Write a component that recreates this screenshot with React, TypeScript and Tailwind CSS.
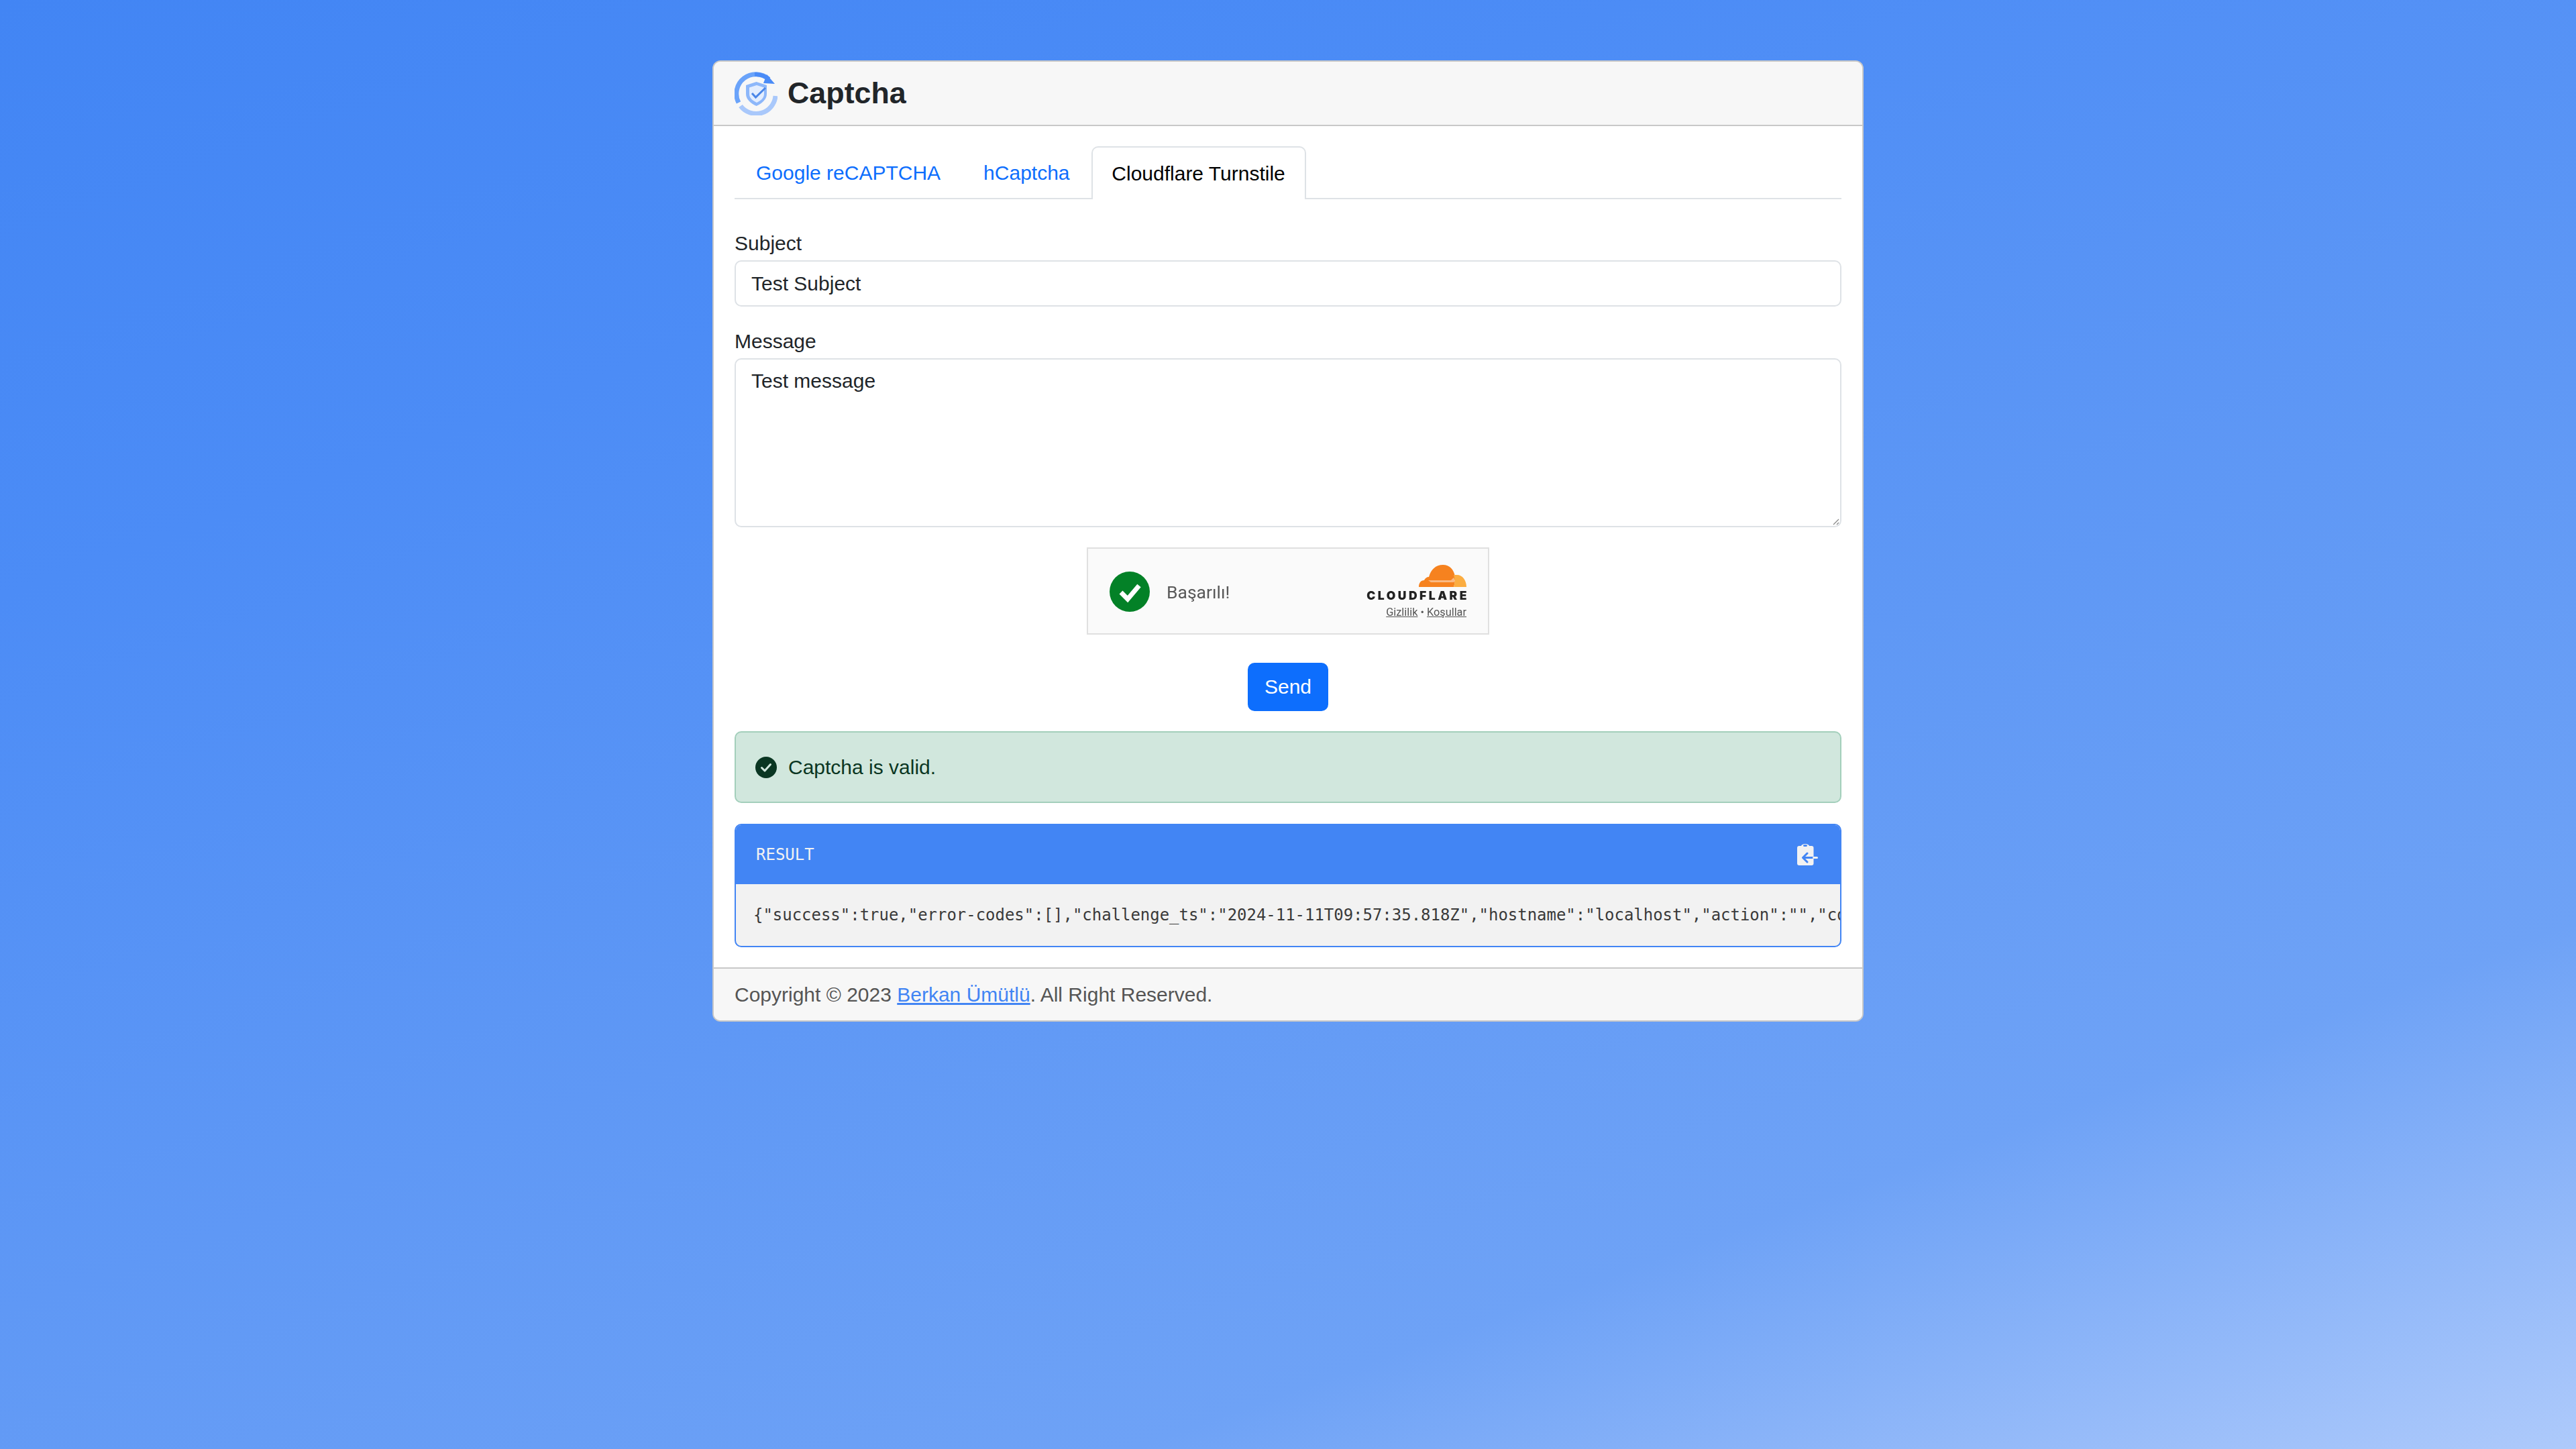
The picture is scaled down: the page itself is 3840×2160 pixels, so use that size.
export default function App() {
  const sans = 'font-["Liberation_Sans",Arial,sans-serif]';
  return (
    <div className={`${sans} min-h-[2160px] pt-[90px] text-[30px] leading-[44px] text-[#212529] bg-[linear-gradient(160deg,#4285f4_0%,#4c8cf6_25%,#5f98f5_55%,#6ea2f6_78%,#aecafb_100%)]`}>
      <div className="mx-auto w-[1716px] bg-white border-2 border-[#c8c8c8] rounded-[12px] overflow-hidden">
        <header className="h-[96px] flex items-center gap-[15px] px-[31px] bg-[#f7f7f7] border-b-2 border-[#c8c8c8]">
          <Logo />
          <h1 className="text-[44.8px] font-bold text-[#212529] -mt-[2px]">Captcha</h1>
        </header>

        <main className="px-[31px] pt-[30px] pb-[30px]">
          <nav className="flex h-[79px] border-b-2 border-[#dee2e6]">
            <a className="h-[79px] px-[32px] flex items-center text-[#0d6efd]">Google reCAPTCHA</a>
            <a className="h-[79px] px-[32px] flex items-center text-[#0d6efd]">hCaptcha</a>
            <a className="h-[79px] w-[320px] justify-center flex items-center text-black bg-white border-2 border-b-0 border-[#dee2e6] rounded-t-[10px]">Cloudflare Turnstile</a>
          </nav>

          <label className="block mt-[44px] h-[47px] leading-[44px]">Subject</label>
          <div className="h-[69px] border-2 border-[#dee2e6] rounded-[10px] px-[23px] flex items-center">Test Subject</div>

          <label className="block mt-[30px] h-[47px] leading-[44px]">Message</label>
          <div className="relative h-[252px] border-2 border-[#dee2e6] rounded-[10px] px-[23px] pt-[10px]">
            Test message
            <svg className="absolute right-[1px] bottom-[1px]" width="12" height="12" viewBox="0 0 12 12">
              <path d="M11 3 3 11M11 8l-3 3" stroke="#888" strokeWidth="1.2" fill="none" />
            </svg>
          </div>

          <div className="flex justify-center mt-[30px]">
            <Turnstile />
          </div>

          <div className="flex justify-center mt-[42px]">
            <button className="w-[120px] h-[72px] rounded-[10px] bg-[#0d6efd] text-white text-[30px]">Send</button>
          </div>

          <div className="mt-[30px] h-[107px] flex items-center gap-[17px] px-[29px] bg-[#d1e7dd] border-2 border-[#a3cfbb] rounded-[10px] text-[#0a3622]">
            <svg width="32" height="32" viewBox="0 0 32 32" className="shrink-0">
              <circle cx="16" cy="16" r="16" fill="#0a3622" />
              <path d="M9.500 16.500l4.500 4.500 8.500-9.500" fill="none" stroke="#d1e7dd" strokeWidth="3" strokeLinecap="round" strokeLinejoin="round" />
            </svg>
            <span>Captcha is valid.</span>
          </div>

          <section className="mt-[31px] h-[184px] rounded-[10px] border-2 border-[#4285f4] bg-[#f2f2f2] overflow-hidden font-['DejaVu_Sans_Mono',monospace]">
            <div className="h-[88px] bg-[#4285f4] flex items-center justify-between pl-[30px] pr-[33px] text-[#f2f2f2] text-[24px]">
              <span>RESULT</span>
              <svg width="31" height="32" viewBox="0 0 31 32">
                <rect x="0" y="3" width="24.500" height="29" rx="3" fill="#f2f2f2" />
                <ellipse cx="12" cy="3" rx="6" ry="3" fill="#f2f2f2" />
                <ellipse cx="12" cy="2.600" rx="3" ry="1.500" fill="#4285f4" />
                <path d="M15 14l-6.500 6.500 6.500 6.500M9 20.500H24.500" fill="none" stroke="#4285f4" strokeWidth="3" strokeLinecap="round" strokeLinejoin="round" />
                <path d="M24.500 20.500H29.500" fill="none" stroke="#f2f2f2" strokeWidth="3" strokeLinecap="round" />
              </svg>
            </div>
            <div className="h-[92px] flex items-center pl-[26px] text-[23.96px] text-[#3a3a3a] whitespace-nowrap overflow-hidden">
              {'{"success":true,"error-codes":[],"challenge_ts":"2024-11-11T09:57:35.818Z","hostname":"localhost","action":"","cdata":""}'}
            </div>
          </section>
        </main>

        <footer className="h-[79px] flex items-center px-[31px] bg-[#f7f7f7] border-t-2 border-[#c8c8c8] text-[#555]">
          <span>
            Copyright © 2023 <a className="text-[#4285f4] underline">Berkan Ümütlü</a>. All Right Reserved.
          </span>
        </footer>
      </div>
    </div>
  );
}

function Logo() {
  return (
    <svg width="64" height="65" viewBox="0 0 64 65" className="shrink-0 blur-[0.4px]">
      <path d="M6 46A29 29 0 0 1 51 11" fill="none" stroke="#6aa3fa" strokeWidth="7" />
      <path d="M30 4A29 29 0 0 1 51 11" fill="none" stroke="#4a8bf7" strokeWidth="6" />
      <path d="M48 4l12 14-17-1z" fill="#4a8bf7" />
      <path d="M61 36A29 29 0 0 1 9 51" fill="none" stroke="#a9c8fb" strokeWidth="7" />
      <path d="M32.500 15l15.500 5v13c0 8-7 14-15.500 18-8.500-4-15.500-10-15.500-18V20z" fill="#8db7fa" />
      <path d="M33 20l11 3.500v9.500c0 6-5 10-11 13-6-3-11-7-11-13v-9.500z" fill="#e3edfe" />
      <path d="M26 32l5.500 6 14.500-14" fill="none" stroke="#4a86e8" strokeWidth="3" />
    </svg>
  );
}

function Turnstile() {
  return (
    <div className="w-[600px] h-[130px] relative bg-[#fafafa] border-2 border-[#e0e0e0] font-['Roboto',sans-serif]">
      <svg width="60" height="60" viewBox="0 0 60 60" className="absolute left-[32px] top-[34px]">
        <circle cx="30" cy="30" r="30" fill="#038127" />
        <path d="M17 31l10 10 17-20" fill="none" stroke="#fff" strokeWidth="7" />
      </svg>
      <span className="absolute left-[117px] top-[43px] text-[26.5px] leading-[44px] text-[#595959] whitespace-nowrap blur-[0.4px]">Başarılı!</span>
      <svg width="71" height="33" viewBox="0 0 71 33" className="absolute right-[32px] top-[24px] blur-[0.4px]">
        <path d="M0 33c0-6 3-10 8-10 1-3 4-5 7-5 3-11 10-18 21-18 10 0 16 7 18 17 0 5 0 11-2 16z" fill="#f6821f" />
        <path d="M52 33c2-6 2-12 0-18 2 0 3 0 5 0 8 0 14 8 14 18z" fill="#fbad41" />
        <path d="M14 23h34l4-4 2 5-2 2H18z" fill="#fff" opacity=".45" />
      </svg>
      <span className="absolute right-[32px] top-[58px] text-[17.500px] leading-[24px] font-['Inter',sans-serif] font-black tracking-[3.500px] -mr-[4px] text-[#222] blur-[0.4px]">CLOUDFLARE</span>
      <span className="absolute right-[32px] top-[83px] text-[16.300px] leading-[24px] text-[#555] whitespace-nowrap blur-[0.3px]">
        <span className="underline">Gizlilik</span> • <span className="underline">Koşullar</span>
      </span>
    </div>
  );
}
